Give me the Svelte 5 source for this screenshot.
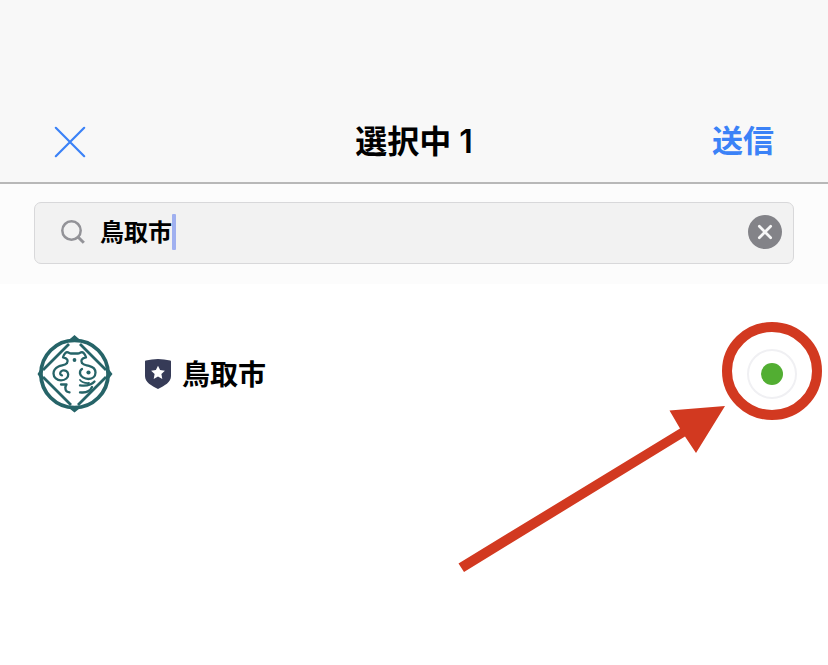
<script>
  let query = $state('鳥取市');
  let contacts = $state([{ id: 'tottori', name: '鳥取市', selected: true }]);
  let count = $derived(contacts.filter((c) => c.selected).length);
</script>

<main class="sheet">
  <header class="bar">
    <button class="close" aria-label="閉じる">
      <svg viewBox="0 0 32 32" width="32" height="32" fill="none" stroke="#3b82f7" stroke-width="2.2" stroke-linecap="round">
        <path d="M1.8 1.8 30.2 30.2M30.2 1.8 1.8 30.2" />
      </svg>
    </button>
    <h1>選択中 {count}</h1>
    <button class="send">送信</button>
  </header>

  <section class="search">
    <div class="field">
      <svg class="lens" viewBox="0 0 24 24" width="24" height="24" fill="none" stroke="#939398" stroke-width="2.5">
        <circle cx="10.5" cy="10.5" r="9.2" />
        <path d="M17 17 22.8 22.8" stroke-width="3" />
      </svg>
      <input type="text" aria-label="検索" bind:value={query} />
      <span class="caret"></span>
      <button class="clear" aria-label="消去" onclick={() => (query = '')}>
        <svg viewBox="0 0 34 34" width="34" height="34">
          <circle cx="17" cy="17" r="17" fill="#838388" />
          <path d="M11.3 11.3 22.7 22.7M22.7 11.3 11.3 22.7" stroke="#f8f8f8" stroke-width="2.7" stroke-linecap="round" />
        </svg>
      </button>
    </div>
  </section>

  <ul class="list">
    {#each contacts as contact (contact.id)}
      <li>
        <label for={contact.id}>
          <svg class="avatar" viewBox="0 0 76 78" width="76" height="78" fill="none" stroke="#266468">
            <circle cx="37.5" cy="39" r="33.6" stroke-width="3.8" />
            <g fill="#266468" stroke="none">
              <path d="M30 6.5 37.5 0 45 6.5ZM30 71.5 37.5 77.5 45 71.5ZM4.5 32.5 .5 39 4.5 45.5ZM70.5 32.5 75.5 39 70.5 45.5Z" />
            </g>
            <path d="M32 9 6 35M43 9 69 35M6 42 34 70M69 42 41 70" stroke-width="2.8" />
            <g stroke-width="2.3" stroke-linecap="round" stroke-linejoin="round">
              <path d="M30 28C31.5 25.5 30.5 23.3 26 22.3C27 19.500 28.500 17.500 30 17.200C32 17.200 32.500 18.500 34 18.500H41C42.500 18.500 43 17.200 45 17.200C46.500 17.500 48 19.500 49 22.300C44.500 23.300 43.500 25.500 45 28" />
              <path d="M30 28C28.500 30.500 24.500 30 21.500 31.500C18.500 33 16.500 35.500 16.500 38.500C16.500 42.500 20 45.300 24 45.300C28.500 45.300 31.500 42.500 31.200 39.300C31 36.300 28 34.800 25.500 35.500C22.500 36.500 22.500 40 25 40.300" />
              <path d="M24 49.500H29.500C27 53 28.500 57 32.500 57.300" />
              <path d="M45 28C46.500 30.500 49 30 52 30.800C56 31.800 58.500 34.500 58.500 37.500C58.500 41.500 55.500 44 51.500 44C47.500 44 43.500 41.500 43 38.500C42.800 36.500 43.500 34.800 45 34" />
              <path d="M57.500 46.500C54.500 50 49 51 43 50.300M55 52C53 56.500 48 58 43 57.300" />
              <path d="M43 45C45 47.500 48 48.300 52 48" stroke-width="1.8" />
            </g>
            <circle cx="37.5" cy="25" r="1.9" fill="#266468" stroke="none" />
            <circle cx="51.5" cy="37.500" r="2.1" fill="#266468" stroke="none" />
          </svg>
          <svg class="shield" viewBox="0 0 26 30" width="26" height="30">
            <path d="M0 2.5Q0 1.7.8 1.6Q7 .2 13 0Q19 .2 25.2 1.6Q26 1.7 26 2.5V17C26 23.5 19.5 26.5 13 30C6.5 26.5 0 23.5 0 17Z" fill="#363b57" />
            <path d="m13 6.7 2.1 4.4 4.8.6-3.5 3.4.9 4.8-4.3-2.3-4.3 2.3.9-4.8-3.5-3.4 4.8-.6Z" fill="#fff" />
          </svg>
          <span class="name">{contact.name}</span>
        </label>
        <input type="checkbox" id={contact.id} bind:checked={contact.selected} />
      </li>
    {/each}
  </ul>

  <svg class="callout" viewBox="0 0 372 254" width="372" height="254" fill="#d23920" aria-hidden="true">
    <ellipse cx="316" cy="50" rx="45" ry="44" fill="none" stroke="#d23920" stroke-width="10" />
    <path d="M269 85 213.5 89.5 224 107.5 2.5 242.5 8 251 229 115.5 240 132Z" />
  </svg>
</main>

<style>
  :global(body) {
    margin: 0;
    background: #fff;
  }

  .sheet {
    position: relative;
    min-height: 100vh;
    overflow: hidden;
    font-family: 'Liberation Sans', 'Noto Sans CJK JP', sans-serif;
    font-weight: 600;
    color: #000;
  }

  button {
    padding: 0;
    border: 0;
    background: none;
    font: inherit;
    cursor: pointer;
  }

  svg {
    display: block;
    flex: none;
  }

  .bar {
    display: grid;
    grid-template-columns: 1fr auto 1fr;
    align-items: center;
    padding: 101px 54px 0;
    height: 81px;
    background: #f8f8f8;
    border-bottom: 2px solid #b8b8b8;
  }

  .close {
    justify-self: start;
  }

  h1 {
    margin: 0;
    font-family: Inter, 'Noto Sans CJK JP', sans-serif;
    font-size: 32px;
    font-weight: 600;
    line-height: 40px;
  }

  .send {
    justify-self: end;
    font-size: 31px;
    line-height: 40px;
    color: #3b82f7;
  }

  .search {
    padding: 18px 34px 20px;
    background: #fcfcfc;
  }

  .field {
    display: flex;
    align-items: center;
    box-sizing: border-box;
    height: 62px;
    padding: 0 11px 2px 26px;
    border: 1px solid #d8d8da;
    border-radius: 7px;
    background: #f2f2f2;
  }

  .field input {
    field-sizing: content;
    min-width: 0;
    height: 36px;
    margin-left: 15px;
    padding: 0 0 4px;
    box-sizing: border-box;
    border: 0;
    outline: 0;
    background: none;
    font: inherit;
    font-size: 24px;
    line-height: 32px;
    color: #000;
  }

  .caret {
    width: 4px;
    height: 36px;
    border-radius: 1px;
    background: #a0b0f0;
  }

  .clear {
    margin-left: auto;
  }

  .list {
    margin: 0;
    padding: 51px 31px 0 37px;
    list-style: none;
  }

  li {
    display: flex;
    align-items: center;
    justify-content: space-between;
  }

  label {
    display: flex;
    align-items: center;
    flex: 1;
  }

  .shield {
    margin: 0 11px 0 32px;
  }

  .name {
    padding-top: 3px;
    font-size: 28px;
    line-height: 40px;
  }

  li input {
    display: grid;
    place-items: center;
    appearance: none;
    box-sizing: border-box;
    width: 50px;
    height: 50px;
    margin: 0;
    border: 2px solid #f0f0f3;
    border-radius: 50%;
  }

  li input:checked::before {
    content: '';
    width: 22px;
    height: 22px;
    border-radius: 50%;
    background: #52ae32;
  }

  .callout {
    position: absolute;
    top: 321px;
    right: 0;
    pointer-events: none;
  }
</style>
